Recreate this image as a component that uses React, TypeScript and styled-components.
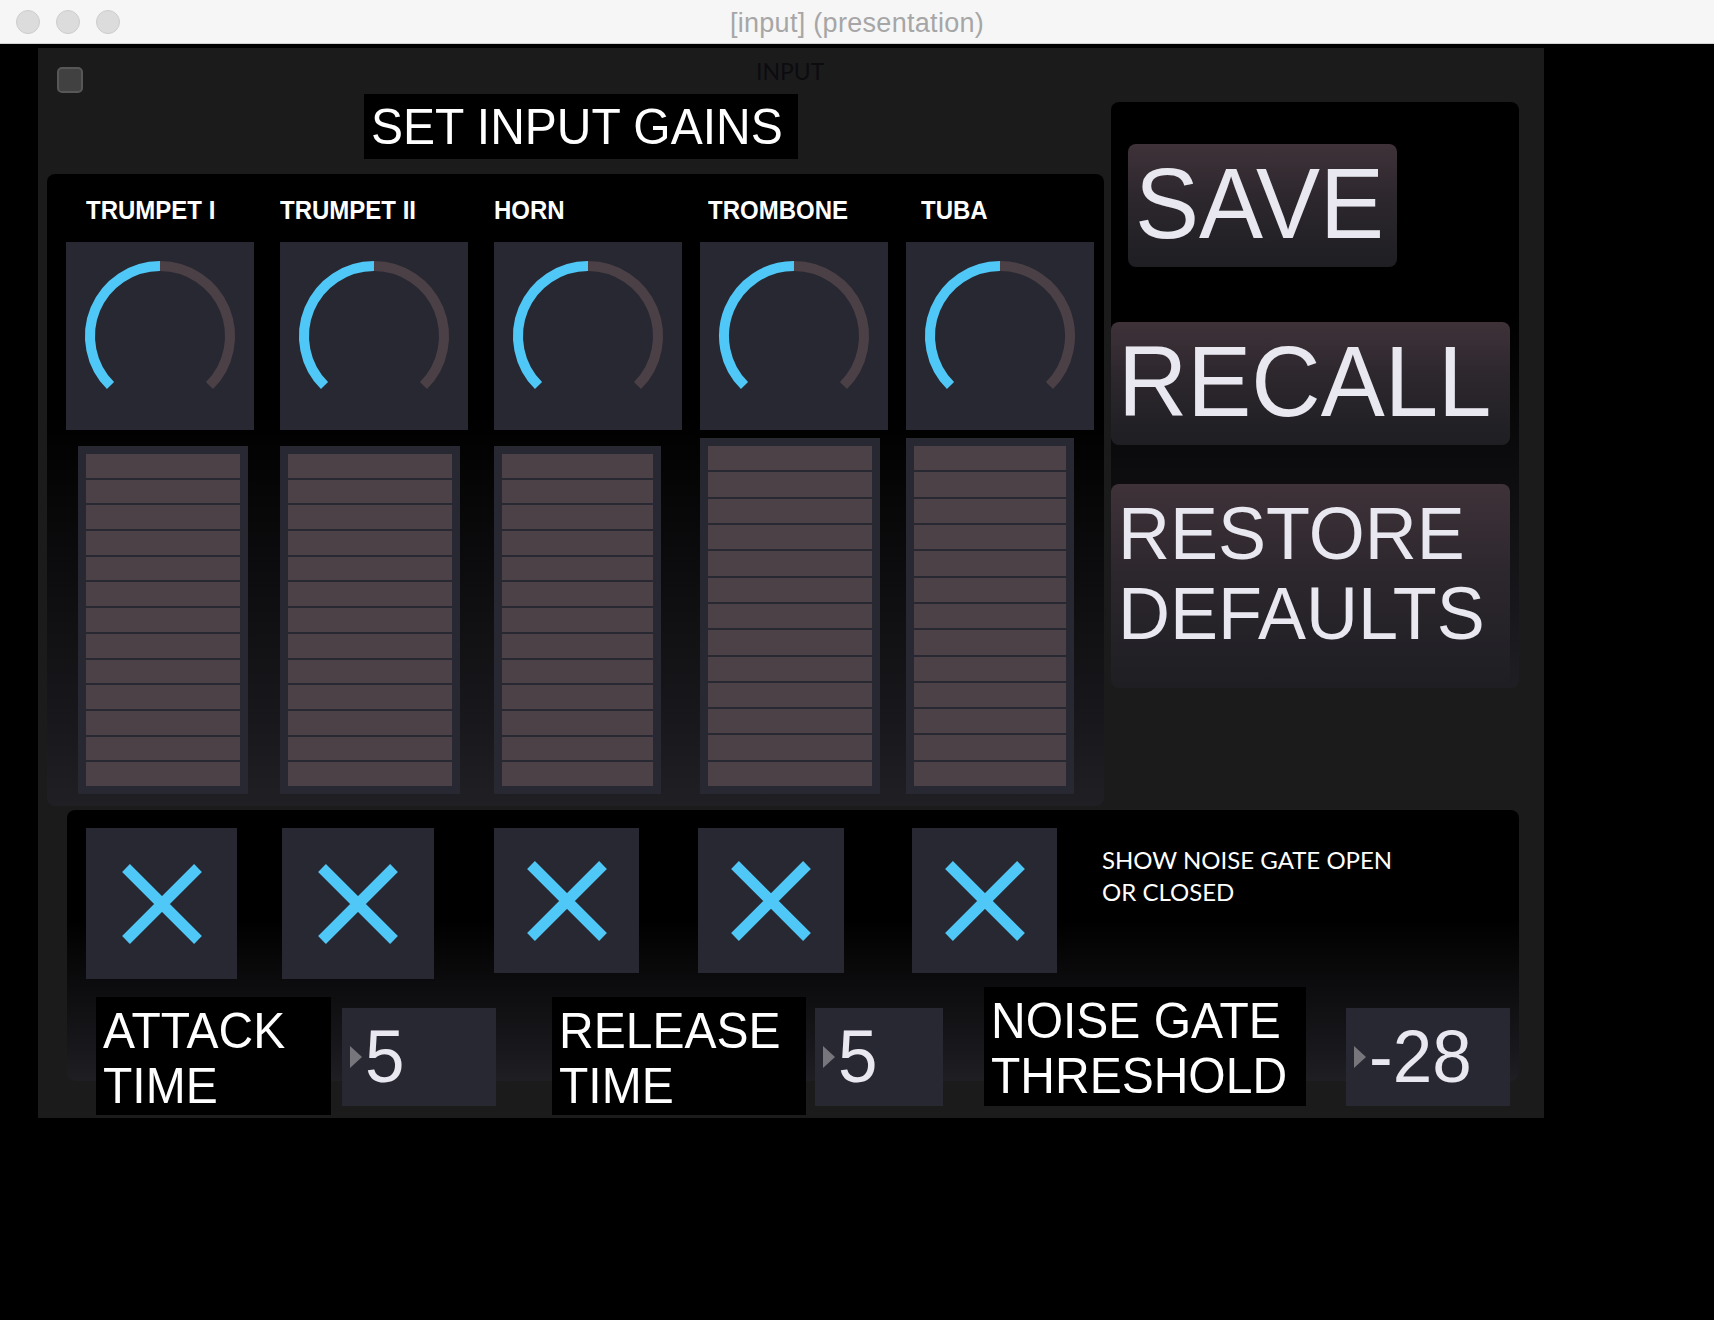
import React from "react";
import styled, { createGlobalStyle } from "styled-components";

const GlobalStyle = createGlobalStyle`
  html, body { margin: 0; padding: 0; background: #000; overflow: hidden; }
  body { font-family: "Liberation Sans", Arial, sans-serif; }
  * { box-sizing: border-box; }
`;

const Window = styled.div`
  width: 1714px;
  height: 1320px;
  background: #000;
  display: flex;
  flex-direction: column;
`;

const TitleBar = styled.header`
  flex: none;
  height: 44px;
  background: #f6f6f6;
  border-bottom: 1px solid #d2d2d2;
  display: grid;
  grid-template-columns: 1fr auto 1fr;
  align-items: center;
`;

const Lights = styled.div`
  display: flex;
  gap: 16px;
  padding-left: 16px;
`;

const Light = styled.span`
  width: 24px;
  height: 24px;
  border-radius: 50%;
  background: #dcdcdc;
  border: 1px solid #cdcdcd;
`;

const WindowTitle = styled.div`
  padding-top: 3px;
  font-family: "Liberation Sans", Arial, sans-serif;
  font-size: 27px;
  letter-spacing: 0.3px;
  color: #a6a6a6;
`;

const Patcher = styled.main`
  flex: none;
  margin: 4px 0 0 38px;
  width: 1506px;
  height: 1070px;
  background: #1b1b1b;
  display: flex;
  flex-direction: column;
`;

const Upper = styled.div`
  display: flex;
  align-items: flex-start;
`;

const LeftColumn = styled.div`
  width: 1066px;
  display: flex;
  flex-direction: column;
`;

const Header = styled.div`
  height: 126px;
  display: flex;
  align-items: flex-start;
`;

const LockBox = styled.span`
  margin: 19px 0 0 19px;
  width: 26px;
  height: 26px;
  border-radius: 5px;
  background: #414141;
  border: 2px solid #575757;
`;

const TitleStack = styled.div`
  margin: 9px 0 0 281px;
  display: flex;
  flex-direction: column;
`;

const PatchName = styled.div`
  margin-left: 392px;
  font-family: Lato, "Liberation Sans", sans-serif;
  font-size: 23px;
  line-height: 28px;
  color: #0c0c10;
`;

const Squeeze = styled.span`
  display: inline-block;
  white-space: nowrap;
  transform: scaleX(0.96);
  transform-origin: left center;
`;

const Heading = styled.div`
  margin-top: 9px;
  width: 434px;
  height: 65px;
  background: #000;
  color: #fff;
  padding-left: 7px;
  display: flex;
  align-items: center;
  font-size: 50px;
  line-height: 1;
`;

const KnobPanel = styled.section`
  margin-left: 9px;
  width: 1057px;
  height: 632px;
  border-radius: 8px;
  background: linear-gradient(to bottom, #000 0%, #000 38%, #1f1f24 100%);
  display: flex;
  align-items: stretch;
  padding: 0 0 12px 19px;
`;

const Channel = styled.div<{ $offset: number }>`
  margin-left: ${(p) => p.$offset}px;
  width: 188px;
  display: flex;
  flex-direction: column;
`;

const ChannelLabel = styled.div<{ $indent: number }>`
  margin: 22px 0 0 ${(p) => p.$indent}px;
  height: 28px;
  font-size: 25px;
  line-height: 28px;
  font-weight: 700;
  color: #fff;
`;

const KnobBox = styled.div`
  margin-top: 18px;
  width: 188px;
  height: 188px;
  background: #282832;
  display: flex;
  align-items: center;
  justify-content: center;
`;

const Meter = styled.div<{ $w: number; $top: number; $indent: number }>`
  flex: 1;
  margin: ${(p) => p.$top}px 0 0 ${(p) => p.$indent}px;
  width: ${(p) => p.$w}px;
  background: #282832;
  padding: 8px;
  display: flex;
  flex-direction: column;
  gap: 2px;
`;

const MeterCell = styled.span`
  flex: 1;
  background: #4d4148;
`;

const SidePanel = styled.aside`
  margin: 54px 0 0 7px;
  width: 408px;
  height: 586px;
  border-radius: 8px;
  background: linear-gradient(to bottom, #000 0%, #000 36%, #1e1e23 100%);
  display: flex;
  flex-direction: column;
  align-items: flex-start;
`;

const ActionButton = styled.button<{
  $w: number;
  $h: number;
  $mt: number;
  $ml: number;
  $size: number;
  $lh: number;
  $stack?: boolean;
  $padL: number;
}>`
  margin: ${(p) => p.$mt}px 0 0 ${(p) => p.$ml}px;
  width: ${(p) => p.$w}px;
  height: ${(p) => p.$h}px;
  border: none;
  border-radius: 8px;
  background: linear-gradient(to bottom, #3f3239 0%, #2c272d 45%, #1e1e23 100%);
  color: #e9e8f0;
  font-family: "Liberation Sans", Arial, sans-serif;
  font-size: ${(p) => p.$size}px;
  line-height: ${(p) => p.$lh}px;
  text-align: left;
  display: flex;
  align-items: ${(p) => (p.$stack ? "flex-start" : "center")};
  padding: ${(p) => (p.$stack ? `9px 0 0 ${p.$padL}px` : `0 0 5px ${p.$padL}px`)};
  cursor: pointer;
`;

const GatePanel = styled.section`
  flex: none;
  margin: 4px 0 0 29px;
  width: 1452px;
  height: 271px;
  border-radius: 8px;
  background: linear-gradient(to bottom, #000 0%, #000 40%, #1e1e23 100%);
  display: flex;
  flex-direction: column;
`;

const GateRow = styled.div`
  display: flex;
  align-items: flex-start;
  padding: 18px 0 0 19px;
`;

const GateToggle = styled.div<{ $w: number; $h: number; $gap: number }>`
  margin-left: ${(p) => p.$gap}px;
  width: ${(p) => p.$w}px;
  height: ${(p) => p.$h}px;
  background: #282832;
  display: flex;
  align-items: center;
  justify-content: center;
`;

const GateNote = styled.p`
  margin: 16px 0 0 45px;
  font-family: Lato, "Liberation Sans", sans-serif;
  font-size: 24px;
  line-height: 32px;
  color: #fff;
`;

const ParamRow = styled.div`
  margin-top: 8px;
  display: flex;
  align-items: flex-start;
  padding-left: 29px;
`;

const ParamLabel = styled.div<{ $w: number; $h: number; $gap: number; $top: number }>`
  margin: ${(p) => p.$top}px 0 0 ${(p) => p.$gap}px;
  width: ${(p) => p.$w}px;
  height: ${(p) => p.$h}px;
  flex: none;
  background: #000;
  color: #fff;
  padding: 7px 0 0 7px;
  font-size: 50px;
  line-height: 55px;
`;

const NumBox = styled.div<{ $w: number; $gap: number }>`
  margin: 21px 0 0 ${(p) => p.$gap}px;
  width: ${(p) => p.$w}px;
  height: 98px;
  flex: none;
  background: #282832;
  display: flex;
  align-items: center;
`;

const NumArrow = styled.span`
  margin-left: 8px;
  width: 0;
  height: 0;
  border-top: 11.5px solid transparent;
  border-bottom: 11.5px solid transparent;
  border-left: 12px solid #76767c;
`;

const NumValue = styled.span`
  margin-left: 3px;
  font-size: 74px;
  line-height: 1;
  color: #e9e8f0;
`;

const BLUE = "#50c8f7";
const DIM = "#4b4046";

function Knob() {
  return (
    <svg width="188" height="188" viewBox="0 0 188 188">
      <path d="M 44.5 143.5 A 70 70 0 0 1 94 24" fill="none" stroke={BLUE} strokeWidth="10" />
      <path d="M 94 24 A 70 70 0 0 1 143.5 143.5" fill="none" stroke={DIM} strokeWidth="10" />
    </svg>
  );
}

function Cross() {
  return (
    <svg width="80" height="80" viewBox="0 0 80 80">
      <path d="M 4 4 L 76 76 M 76 4 L 4 76" stroke={BLUE} strokeWidth="11" strokeLinecap="butt" />
    </svg>
  );
}

const channels = [
  { name: "TRUMPET I", offset: 0, labelIndent: 20, meterW: 170, meterTop: 16, meterIndent: 12 },
  { name: "TRUMPET II", offset: 26, labelIndent: 0, meterW: 180, meterTop: 16, meterIndent: 0 },
  { name: "HORN", offset: 26, labelIndent: 0, meterW: 167, meterTop: 16, meterIndent: 0 },
  { name: "TROMBONE", offset: 18, labelIndent: 8, meterW: 180, meterTop: 8, meterIndent: 0 },
  { name: "TUBA", offset: 18, labelIndent: 15, meterW: 168, meterTop: 8, meterIndent: 0 },
];

const gates = [
  { w: 151, h: 151, gap: 0 },
  { w: 152, h: 151, gap: 45 },
  { w: 145, h: 145, gap: 60 },
  { w: 146, h: 145, gap: 59 },
  { w: 145, h: 145, gap: 68 },
];

const cells = Array.from({ length: 13 }, (_, i) => i);

export default function App() {
  return (
    <>
      <GlobalStyle />
      <Window>
        <TitleBar>
          <Lights>
            <Light />
            <Light />
            <Light />
          </Lights>
          <WindowTitle>[input] (presentation)</WindowTitle>
          <div />
        </TitleBar>
        <Patcher>
          <Upper>
            <LeftColumn>
              <Header>
                <LockBox />
                <TitleStack>
                  <PatchName>INPUT</PatchName>
                  <Heading>
                    <Squeeze>SET INPUT GAINS</Squeeze>
                  </Heading>
                </TitleStack>
              </Header>
              <KnobPanel>
                {channels.map((c) => (
                  <Channel key={c.name} $offset={c.offset}>
                    <ChannelLabel $indent={c.labelIndent}>
                      <Squeeze>{c.name}</Squeeze>
                    </ChannelLabel>
                    <KnobBox>
                      <Knob />
                    </KnobBox>
                    <Meter $w={c.meterW} $top={c.meterTop} $indent={c.meterIndent}>
                      {cells.map((i) => (
                        <MeterCell key={i} />
                      ))}
                    </Meter>
                  </Channel>
                ))}
              </KnobPanel>
            </LeftColumn>
            <SidePanel>
              <ActionButton $w={269} $h={123} $mt={42} $ml={17} $size={100} $lh={115} $padL={7}>
                <Squeeze>SAVE</Squeeze>
              </ActionButton>
              <ActionButton $w={399} $h={123} $mt={55} $ml={0} $size={100} $lh={115} $padL={7}>
                <Squeeze>RECALL</Squeeze>
              </ActionButton>
              <ActionButton $w={399} $h={202} $mt={39} $ml={0} $size={75} $lh={80} $padL={7} $stack>
                <Squeeze>
                  RESTORE
                  <br />
                  DEFAULTS
                </Squeeze>
              </ActionButton>
            </SidePanel>
          </Upper>
          <GatePanel>
            <GateRow>
              {gates.map((g, i) => (
                <GateToggle key={i} $w={g.w} $h={g.h} $gap={g.gap}>
                  <Cross />
                </GateToggle>
              ))}
              <GateNote>
                SHOW NOISE GATE OPEN
                <br />
                OR CLOSED
              </GateNote>
            </GateRow>
            <ParamRow>
              <ParamLabel $w={235} $h={118} $gap={0} $top={10}>
                <Squeeze>
                  ATTACK
                  <br />
                  TIME
                </Squeeze>
              </ParamLabel>
              <NumBox $w={154} $gap={11}>
                <NumArrow />
                <NumValue>
                  <Squeeze>5</Squeeze>
                </NumValue>
              </NumBox>
              <ParamLabel $w={254} $h={118} $gap={56} $top={10}>
                <Squeeze>
                  RELEASE
                  <br />
                  TIME
                </Squeeze>
              </ParamLabel>
              <NumBox $w={128} $gap={9}>
                <NumArrow />
                <NumValue>
                  <Squeeze>5</Squeeze>
                </NumValue>
              </NumBox>
              <ParamLabel $w={322} $h={119} $gap={41} $top={0}>
                <Squeeze>
                  NOISE GATE
                  <br />
                  THRESHOLD
                </Squeeze>
              </ParamLabel>
              <NumBox $w={164} $gap={40}>
                <NumArrow />
                <NumValue>
                  <Squeeze>-28</Squeeze>
                </NumValue>
              </NumBox>
            </ParamRow>
          </GatePanel>
        </Patcher>
      </Window>
    </>
  );
}
